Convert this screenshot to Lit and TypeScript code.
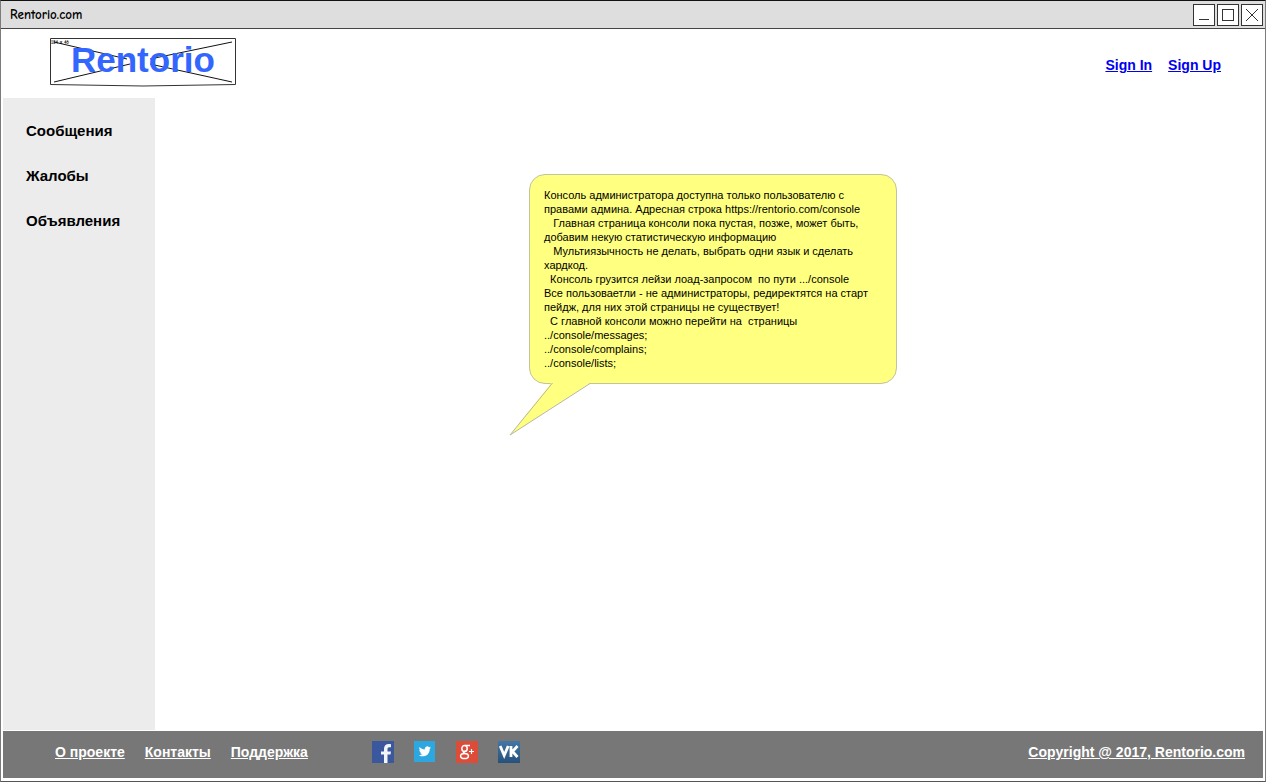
import { LitElement, html, css, svg } from "lit";
import { customElement } from "lit/decorators.js";

const SECTIONS = ["Сообщения", "Жалобы", "Объявления"];
const FOOTER_LINKS = ["О проекте", "Контакты", "Поддержка"];
const NOTE = [
  "Консоль администратора доступна только пользователю с",
  "правами админа. Адресная строка https://rentorio.com/console",
  "   Главная страница консоли пока пустая, позже, может быть,",
  "добавим некую статистическую информацию",
  "   Мультиязычность не делать, выбрать одни язык и сделать",
  "хардкод.",
  "  Консоль грузится лейзи лоад-запросом  по пути .../console",
  "Все пользоваетли - не администраторы, редиректятся на старт",
  "пейдж, для них этой страницы не существует!",
  "  С главной консоли можно перейти на  страницы",
  "../console/messages;",
  "../console/complains;",
  "../console/lists;",
].join("\n");

const CONTROLS = [
  { label: "Minimize", glyph: svg`<path d="M6 15.500h10" />` },
  { label: "Maximize", glyph: svg`<rect x="5.5" y="5.5" width="11" height="11" />` },
  { label: "Close", glyph: svg`<path d="M5 5l12 12M17 5L5 17" />` },
];

const SOCIAL = [
  {
    label: "Facebook",
    art: svg`<rect width="22" height="22" fill="#3b579d" />
      <path fill="#f2f4f8" d="M12 22v-8.500H9V10.500h3V8c0-3.300 1.900-5 4.700-5 1 0 1.800.1 2.300.2v3.100h-1.600c-1.500 0-1.900.8-1.900 1.900v2.300H19l-.5 3h-3V22z" />`,
  },
  {
    label: "Twitter",
    art: svg`<rect width="21" height="21" fill="#2ca7e0" />
      <path fill="#fff" d="M17 6.600c-.5.200-.9.300-1.400.4.500-.3.900-.8 1.100-1.400-.5.300-1 .5-1.600.6a2.500 2.500 0 0 0-4.300 2.300C8.700 8.400 6.800 7.400 5.600 5.900c-.7 1.200-.3 2.600.8 3.300-.4 0-.8-.1-1.100-.3 0 1.200.8 2.200 2 2.500-.4.100-.8.100-1.100 0 .3 1 1.200 1.700 2.300 1.700A5.100 5.100 0 0 1 4.800 14.200c4.900 3 11 0 10.900-6.200.5-.4 1-.9 1.300-1.400z" />`,
  },
  {
    label: "Google+",
    art: svg`<rect width="22" height="22" fill="#dd4b39" />
      <g fill="none" stroke="#fff" stroke-width="1.500">
        <ellipse cx="8.500" cy="7.500" rx="2.700" ry="3" />
        <path d="M9 4.500h5M10.500 10c-3 .5-4 1.800-2 2.500" />
        <ellipse cx="8.500" cy="15" rx="3.900" ry="2.600" />
        <path stroke-width="1.200" d="M13 10.500h5M15.500 8v5" />
      </g>`,
  },
  {
    label: "VK",
    art: svg`<defs><linearGradient id="vk" x2="0" y2="1"><stop stop-color="#4377a5" /><stop offset="1" stop-color="#26517b" /></linearGradient></defs>
      <rect width="22" height="22" fill="url(#vk)" />
      <path fill="none" stroke="#fff" stroke-width="2.800" d="M2.200 5L6.200 14.500L10.200 5M13 5v11M19.500 5l-5 5.500l5 5.500" />`,
  },
];

@customElement("app-root")
export class AppRoot extends LitElement {
  static styles = css`
    :host {
      display: block;
      font-family: "Liberation Sans", Arial, sans-serif;
      color: #000;
    }
    .window {
      box-sizing: border-box;
      min-height: 100vh;
      display: flex;
      flex-direction: column;
      border: 1px solid #7c7a7c;
      border-bottom-color: #555;
      border-top-color: #111;
      background: #fff;
    }
    .titlebar {
      display: flex;
      align-items: center;
      justify-content: space-between;
      box-sizing: border-box;
      height: 28px;
      padding: 0 2px 0 9px;
      background: #dedede;
      border-bottom: 1px solid #444;
    }
    .title {
      font: 700 13px "Comic Sans MS", "Comic Neue", Lato, sans-serif;
    }
    .controls {
      display: flex;
      gap: 2px;
    }
    .control {
      padding: 0;
      border: 0;
      background: none;
      display: block;
    }
    .control svg,
    .logo svg,
    .social svg,
    .tail {
      display: block;
    }
    .header {
      display: flex;
      align-items: flex-start;
      justify-content: space-between;
      box-sizing: border-box;
      height: 69px;
      padding: 9px 44px 0 49px;
    }
    .auth {
      display: flex;
      gap: 16px;
      padding-top: 18px;
      font: 700 14px/18px "Liberation Sans", Arial, sans-serif;
    }
    .auth a {
      color: #0000f0;
    }
    .body {
      flex: 1;
      display: flex;
      margin-left: 2px;
    }
    .sidebar {
      flex: none;
      width: 152px;
      box-sizing: border-box;
      padding: 24px 23px;
      background: #ececec;
    }
    .sections {
      display: flex;
      flex-direction: column;
      gap: 27px;
      margin: 0;
      padding: 0;
      list-style: none;
    }
    .sections a {
      display: block;
      color: #000;
      text-decoration: none;
      font-size: 15px;
      line-height: 18px;
      font-weight: 700;
    }
    .main {
      flex: 1;
      display: flex;
      justify-content: center;
      align-items: flex-start;
      padding: 76px 0 0 6px;
    }
    .note {
      position: relative;
      box-sizing: border-box;
      width: 368px;
      padding: 13px 14px;
      border: 1px solid #c3c39c;
      border-radius: 16px;
      background: #ffff80;
    }
    .note-text {
      margin: 0;
      font-size: 11px;
      line-height: 14px;
      white-space: pre;
    }
    .tail {
      position: absolute;
      left: -21px;
      top: calc(100% - 1px);
    }
    .footer {
      display: flex;
      align-items: center;
      justify-content: space-between;
      height: 47px;
      margin: 1px 2px 3px;
      padding: 0 18px 5px 52px;
      box-sizing: border-box;
      background: #777;
      font-size: 14px;
      line-height: 18px;
      font-weight: 700;
    }
    .footer a {
      color: #fff;
    }
    .footer-left,
    .links,
    .social {
      display: flex;
      align-items: center;
    }
    .footer-left {
      gap: 64px;
    }
    .links {
      gap: 20px;
    }
    .social {
      gap: 20px;
    }
    .logo-word {
      font: 700 35px "Liberation Sans", Arial, sans-serif;
      fill: #3366ff;
    }
    .logo-size {
      font: 700 5px "Comic Sans MS", "Comic Neue", Lato, sans-serif;
    }
  `;

  render() {
    return html`
      <div class="window">
        <div class="titlebar">
          <span class="title">Rentorio.com</span>
          <div class="controls">
            ${CONTROLS.map(
              (c) => html`<button class="control" type="button" aria-label=${c.label}>
                <svg width="22" height="22" viewBox="0 0 22 22" fill="none" stroke="#333">
                  <rect x=".5" y=".5" width="21" height="21" fill="#fff" />
                  ${c.glyph}
                </svg>
              </button>`
            )}
          </div>
        </div>
        <header class="header">
          <a class="logo" href="#" aria-label="Rentorio">
            <svg width="186" height="49" viewBox="0 0 186 49">
              <path d="M.5.500H185.500V46.500Q93 49.500.5 46.500Z" fill="#fff" stroke="#333" />
              <path d="M4 4L77 21M182 4L100 21M4 44L80 26M182 44L100 26" fill="none" stroke="#111" />
              <text class="logo-size" x="1" y="6">184 x 46</text>
              <text class="logo-word" x="21" y="34">Rentorio</text>
            </svg>
          </a>
          <nav class="auth">
            <a href="#">Sign In</a>
            <a href="#">Sign Up</a>
          </nav>
        </header>
        <div class="body">
          <nav class="sidebar">
            <ul class="sections">
              ${SECTIONS.map((s) => html`<li><a href="#">${s}</a></li>`)}
            </ul>
          </nav>
          <main class="main">
            <aside class="note">
              <p class="note-text">${NOTE}</p>
              <svg class="tail" width="84" height="54" viewBox="0 0 84 54">
                <path d="M43 0L1 53L81 1V0Z" fill="#ffff80" />
                <path d="M43.500 1L1 53L81 1.500" fill="none" stroke="#b8b89c" />
              </svg>
            </aside>
          </main>
        </div>
        <footer class="footer">
          <div class="footer-left">
            <nav class="links">
              ${FOOTER_LINKS.map((l) => html`<a href="#">${l}</a>`)}
            </nav>
            <div class="social">
              ${SOCIAL.map(
                (s) => html`<a href="#" aria-label=${s.label}><svg width="22" height="22" viewBox="0 0 22 22">${s.art}</svg></a>`
              )}
            </div>
          </div>
          <a class="copyright" href="#">Copyright @ 2017, Rentorio.com</a>
        </footer>
      </div>
    `;
  }
}
